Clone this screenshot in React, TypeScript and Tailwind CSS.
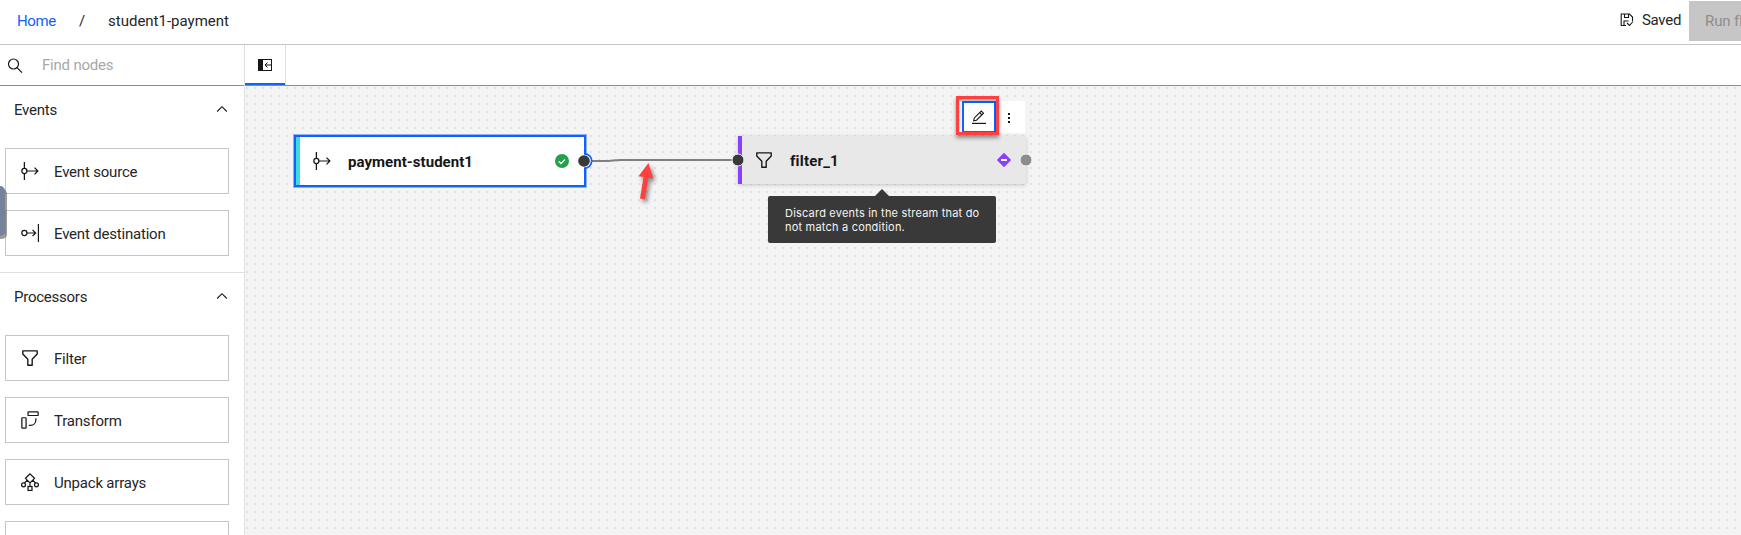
import React from "react";

type IconProps = { className?: string };

const Svg = ({ className = "", children }: React.PropsWithChildren<IconProps>) => (
  <svg viewBox="0 0 32 32" className={`shrink-0 ${className}`} fill="none" stroke="#161616" strokeWidth="2.2">
    {children}
  </svg>
);

const SourceIcon = ({ className }: IconProps) => (
  <Svg className={className}>
    <circle cx="6" cy="16" r="4.500" />
    <path d="M6 0v11.500M6 20.500V32M10.500 16H30M24 10l6 6-6 6" />
  </Svg>
);

const DestinationIcon = ({ className }: IconProps) => (
  <Svg className={className}>
    <circle cx="6" cy="16" r="4.500" />
    <path d="M10.500 16H26M20.500 10.500l5.500 5.500-5.500 5.500M31 0v32" />
  </Svg>
);

const FilterIcon = ({ className }: IconProps) => (
  <Svg className={className}>
    <path d="M4.500 4.500h23v5l-8 8.500v9.500h-7V18l-8-8.500z" strokeLinejoin="round" />
  </Svg>
);

const TransformIcon = ({ className }: IconProps) => (
  <Svg className={className}>
    <rect x="12.500" y="1.500" width="18" height="6.500" rx="1" />
    <rect x="1.500" y="12" width="7.500" height="18.500" rx="1" />
    <path d="M26.500 13v2c0 6-4 10.500-9.500 10.500h-3" />
  </Svg>
);

const UnpackIcon = ({ className }: IconProps) => (
  <Svg className={className}>
    <path d="M16 1.500l8 8-8 8-8-8zM11 13l-5 5M21 13l5 5M16 17.500V24" />
    <circle cx="4.500" cy="21" r="3.500" />
    <circle cx="27.500" cy="21" r="3.500" />
    <rect x="12.500" y="24" width="7" height="7" />
  </Svg>
);

const Chevron = () => (
  <svg viewBox="0 0 12 8" className="-mt-0.5 h-2 w-3 shrink-0" fill="none" stroke="#161616" strokeWidth="1.1">
    <path d="M1.200 6.500L6 1.700l4.800 4.800" />
  </svg>
);

const NodeCard = ({ icon, label }: { icon: React.ReactNode; label: string }) => (
  <div className="flex h-[46px] w-[224px] shrink-0 items-center border border-[#c6c6c6] bg-white pl-[15px]">
    <span className="flex w-[33px]">{icon}</span>
    <span className="mt-[2px] text-[15px] tracking-[-0.2px]">{label}</span>
  </div>
);

const SectionTitle = ({ label }: { label: string }) => (
  <div className="flex h-12 items-center justify-between pl-[14px] pr-4">
    <span className="text-[15px] tracking-[-0.25px]">{label}</span>
    <Chevron />
  </div>
);

const Header = () => (
  <header className="flex h-[45px] shrink-0 items-start border-b border-[#c6c6c6] text-[15px]">
    <div className="flex h-[42px] items-center">
      <span className="ml-[17px] w-[62px] tracking-[-0.4px] text-[#0f62fe]">Home</span>
      <span className="w-[29px]">/</span>
      <span>student1-payment</span>
    </div>
    <div className="ml-auto flex w-[121px] items-start overflow-hidden">
      <div className="flex h-10 w-[69px] shrink-0 items-center">
        <svg viewBox="0 0 14 14" className="h-[14px] w-[14px] shrink-0" fill="none" stroke="#161616" strokeWidth="1.1">
          <path d="M6 12.500H1.200V1H9.500L12.500 4v4M4.500 1v3.500h4V1M4 12V8h4.500M7 10l2.500 2.500L13 8.500" />
        </svg>
        <span className="ml-[8px] text-[15px] tracking-[-0.3px]">Saved</span>
      </div>
      <div className="mt-px flex h-10 w-[120px] shrink-0 items-center bg-[#c6c6c6] pl-4 text-[#8d8d8d]">
        <span className="whitespace-nowrap tracking-[-0.1px]">Run flow</span>
      </div>
    </div>
  </header>
);

const Sidebar = () => (
  <aside className="relative flex w-[245px] shrink-0 flex-col overflow-hidden border-r border-[#e0e0e0] bg-white">
    <div className="flex h-[41px] shrink-0 items-center border-b border-[#8d8d8d] pl-[7px]">
      <svg viewBox="0 0 16 16" className="mt-px h-4 w-4" fill="none" stroke="#161616" strokeWidth="1.2">
        <circle cx="6.500" cy="6" r="5" />
        <path d="M10 9.700l5 5" />
      </svg>
      <span className="ml-[19px] mt-px text-[15px] tracking-[-0.2px] text-[#a8a8a8]">Find nodes</span>
    </div>
    <section className="h-[187px] shrink-0 border-b border-[#e0e0e0]">
      <SectionTitle label="Events" />
      <div className="flex flex-col gap-4 pl-[5px] pt-[14px]">
        <NodeCard icon={<SourceIcon className="h-[18px] w-[18px]" />} label="Event source" />
        <NodeCard icon={<DestinationIcon className="h-[18px] w-[18px]" />} label="Event destination" />
      </div>
    </section>
    <section className="shrink-0">
      <SectionTitle label="Processors" />
      <div className="flex flex-col gap-4 pl-[5px] pt-[14px]">
        <NodeCard icon={<FilterIcon className="-ml-px h-5 w-5" />} label="Filter" />
        <NodeCard icon={<TransformIcon className="h-[18px] w-[18px]" />} label="Transform" />
        <NodeCard icon={<UnpackIcon className="h-[18px] w-[18px]" />} label="Unpack arrays" />
        <NodeCard icon={null} label="" />
      </div>
    </section>
    <div className="absolute -left-2 top-[141px] h-[50px] w-[13px] rounded-r-[5px] bg-[#76829a] shadow-[2px_3px_0_0_rgba(90,90,90,0.6)]" />
  </aside>
);

const Canvas = () => (
  <div className="relative flex-1 overflow-hidden bg-[#f4f4f4]">
    <svg className="absolute inset-0 h-full w-full">
      <defs>
        <pattern id="dots" width="8" height="8" patternUnits="userSpaceOnUse">
          <rect x="1" y="1" width="2" height="2" fill="#e0e0e0" />
        </pattern>
      </defs>
      <rect width="100%" height="100%" fill="url(#dots)" />
    </svg>

    <div className="absolute left-[49px] top-[49px] flex h-[52px] w-[292px] items-center border-2 border-[#0f62fe] bg-white shadow-[0_0_0_1px_rgba(15,98,254,0.45)]">
      <span className="h-full w-1 bg-[#3ddbd9]" />
      <SourceIcon className="ml-[13px] h-[18px] w-[18px]" />
      <span className="ml-[17px] mt-[2px] text-[15px] font-bold tracking-[0.05px] text-[#161616]">payment-student1</span>
    </div>

    <div className="absolute left-[493px] top-[50px] flex h-12 w-[288px] items-center bg-[#e8e8e8] shadow-[0_1px_4px_rgba(0,0,0,0.2)]">
      <span className="h-full w-1 bg-[#8a3ffc]" />
      <FilterIcon className="ml-3 h-5 w-5" />
      <span className="ml-4 mt-[2px] text-[15px] font-bold tracking-[0.2px] text-[#161616]">filter_1</span>
    </div>

    <div className="absolute left-[717px] top-[15px] flex h-8 w-[63px] bg-white">
      <div className="flex w-[34px] items-center justify-center border-2 border-[#0f62fe]">
        <svg viewBox="0 0 14 14" className="h-[14px] w-[14px]" fill="none" stroke="#161616" strokeWidth="1.1">
          <path d="M0 13.400h14" strokeWidth="1.200" />
          <path d="M1.700 10.800l.6-2.900L9.300 1l2.200 2.200-7 7zM7.700 2.600l2.200 2.200" />
        </svg>
      </div>
      <svg viewBox="0 0 4 12" className="ml-[11px] mt-[11px] h-3 w-1" fill="#161616">
        <rect x="1" y="1" width="2" height="2" />
        <rect x="1" y="5" width="2" height="2" />
        <rect x="1" y="9" width="2" height="2" />
      </svg>
    </div>
    <div className="absolute left-[711px] top-[10px] h-[39px] w-[43px] border-[3px] border-[#ff4040] shadow-[0_3px_4px_rgba(0,0,0,0.4),inset_0_2px_2px_rgba(0,0,0,0.3)]" />

    <svg className="absolute inset-0 h-full w-full">
      <path d="M347 75h12c8 0 10-1 17-1h111" fill="none" stroke="#808080" strokeWidth="2" />
      <circle cx="339.500" cy="75" r="8" fill="#0f62fe" />
      <circle cx="339.500" cy="75" r="6.300" fill="#fff" />
      <path d="M330 66h9v18h-9z" fill="#fff" />
      <circle cx="339" cy="75" r="5.800" fill="#393939" />
      <circle cx="493" cy="74" r="6" fill="#393939" stroke="#f4f4f4" strokeWidth="1" />
      <circle cx="781" cy="74" r="6" fill="#8d8d8d" stroke="#f4f4f4" strokeWidth="1" />
      <circle cx="317" cy="75" r="7" fill="#24a148" />
      <path d="M313.700 75.200l2.300 2.300 4-4" fill="none" stroke="#fff" strokeWidth="1.300" />
      <path d="M759 67.800l6.200 6.200-6.200 6.200-6.200-6.200z" fill="#8a3ffc" stroke="#8a3ffc" strokeWidth="1.400" strokeLinejoin="round" />
      <rect x="756" y="73" width="6" height="2" fill="#fff" />
      <g className="drop-shadow-[2px_3px_2px_rgba(0,0,0,0.45)]">
        <path d="M403.500 77l4.800 15.500-5-.8-3.300 21.800-5-1 3.500-21.500-5-.8z" fill="#ff4040" />
      </g>
    </svg>

    <div className="absolute left-[523px] top-[110px] h-[47px] w-[228px] rounded-[2px] bg-[#393939] pl-[17px] pt-[10px] font-['Inter'] text-[11px] leading-[14px] tracking-[0.2px] whitespace-nowrap text-[#f4f4f4]">
      <div>Discard events in the stream that do</div>
      <div>not match a condition.</div>
      <svg viewBox="0 0 14 7" className="absolute left-[107px] -top-[7px] h-[7px] w-[14px]">
        <path d="M0 7l7-7 7 7z" fill="#393939" />
      </svg>
    </div>
  </div>
);

const Workspace = () => (
  <main className="flex min-w-0 flex-1 flex-col">
    <div className="flex h-[41px] shrink-0 border-b border-[#8d8d8d] bg-white">
      <div className="flex h-10 w-[41px] items-center justify-center border-r border-[#e0e0e0] shadow-[inset_0_-2px_0_#0f62fe]">
        <svg viewBox="0 0 14 12" className="h-3 w-[14px]" fill="none" stroke="#161616">
          <rect x=".5" y=".5" width="13" height="11" />
          <path d="M0 0h5v12H0z" fill="#161616" stroke="none" />
          <path d="M13 6H7M9.500 3.500L7 6l2.500 2.500" />
        </svg>
      </div>
    </div>
    <Canvas />
  </main>
);

export default function App() {
  return (
    <div className="flex h-[535px] w-[1741px] flex-col overflow-hidden bg-white font-['Roboto',sans-serif] text-[#262626]">
      <Header />
      <div className="flex min-h-0 flex-1">
        <Sidebar />
        <Workspace />
      </div>
    </div>
  );
}
